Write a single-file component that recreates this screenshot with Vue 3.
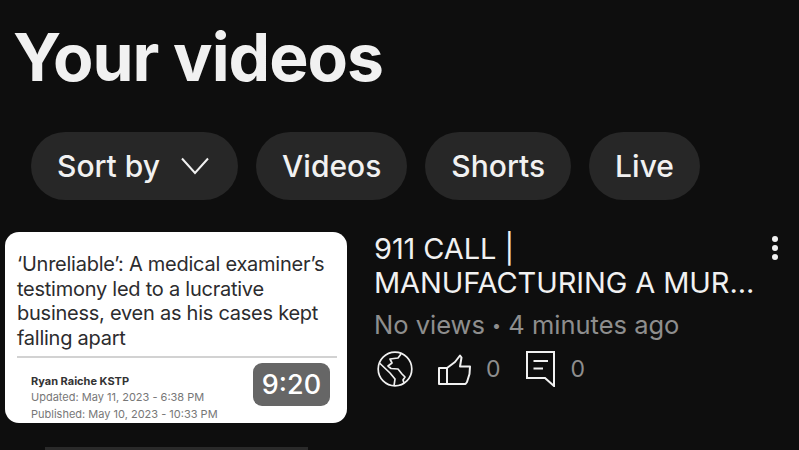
<script setup>
const filters = ['Videos', 'Shorts', 'Live']
</script>

<template>
  <main class="page">
    <h1 class="title">Your videos</h1>

    <div class="chips">
      <button class="chip chip-sort">
        Sort by
        <svg class="chevron" width="28" height="18" viewBox="0 0 28 18" fill="none" stroke="#f1f1f1" stroke-width="2">
          <path d="M1 1.5 14 16 27 1.5" />
        </svg>
      </button>
      <button v-for="f in filters" :key="f" class="chip">{{ f }}</button>
    </div>

    <section class="video">
      <div class="thumb">
        <p class="headline">‘Unreliable’: A medical examiner’s testimony led to a lucrative business, even as his cases kept falling apart</p>
        <div class="rule"></div>
        <div class="byline">
          <strong>Ryan Raiche KSTP</strong>
          <span>Updated: May 11, 2023 - 6:38 PM</span>
          <span>Published: May 10, 2023 - 10:33 PM</span>
        </div>
        <span class="duration">9:20</span>
      </div>

      <div class="info">
        <div class="info-top">
          <h2 class="video-title">911 CALL |<br />MANUFACTURING A MUR...</h2>
          <div class="kebab"><i></i><i></i><i></i></div>
        </div>
        <p class="meta">No views <span class="dot">•</span> 4 minutes ago</p>
        <div class="stats">
          <svg class="globe" width="36" height="36" viewBox="0 0 36 36" fill="none" stroke="#f1f1f1" stroke-width="1.7" stroke-linejoin="round">
            <circle cx="18" cy="18" r="16.8" />
            <path d="M24 3 21 7 13 8 15 12 11 15 14 17.5 21 18 25 23 28 26 26 29 27 32" />
            <path d="M2.5 12 13 22 18 28 17 34.8" />
          </svg>
          <svg class="thumb-up" width="33" height="31" viewBox="0 0 33 31" fill="none" stroke="#f1f1f1" stroke-width="2" stroke-linejoin="round">
            <path d="M1 14h8V30H1z" />
            <path d="M9 14 17 8 22 1.5 23.5 3.5 22 12.5H32L31.5 20 29 28 27.5 30H9" />
          </svg>
          <span class="count">0</span>
          <svg class="comment" width="29" height="36" viewBox="0 0 29 36" fill="none" stroke="#f1f1f1" stroke-width="2">
            <path d="M1 1H28V35L19 27H1z" />
            <path d="M7.5 10H22M7.5 17.5H17" />
          </svg>
          <span class="count">0</span>
        </div>
      </div>
    </section>

    <div class="next-thumb"></div>
  </main>
</template>

<style>
html,
body {
  margin: 0;
  background: #0e0e0e;
}
</style>

<style scoped>
.page {
  width: 799px;
  height: 450px;
  overflow: hidden;
  background: #0e0e0e;
  font-family: Inter, "Liberation Sans", sans-serif;
  color: #f1f1f1;
}

.title {
  margin: 0;
  padding: 17px 0 0 13px;
  height: 132px;
  box-sizing: border-box;
  font-size: 66px;
  line-height: 80px;
  font-weight: 700;
  letter-spacing: -1px;
}

.chips {
  display: flex;
  gap: 18px;
  padding-left: 31px;
}

.chip {
  height: 68px;
  padding: 0 26px;
  border: 0;
  border-radius: 34px;
  background: #272727;
  color: #f1f1f1;
  font: 500 30px Inter, "Liberation Sans", sans-serif;
  display: flex;
  align-items: center;
}

.chip-sort {
  gap: 21px;
  padding-right: 29px;
}

.video {
  display: flex;
  padding: 32px 0 0 5px;
}

.thumb {
  position: relative;
  width: 342px;
  height: 191px;
  flex: none;
  box-sizing: border-box;
  padding: 20px 10px 0 12px;
  border-radius: 14px;
  background: #fff;
  color: #2c2c2e;
  overflow: hidden;
}

.headline {
  margin: 0;
  font-size: 20px;
  line-height: 24.7px;
  letter-spacing: -0.25px;
}

.rule {
  height: 2px;
  margin-top: 5px;
  background: #d2d2d2;
}

.byline {
  display: flex;
  flex-direction: column;
  padding: 15px 0 0 14px;
  font-size: 11px;
  line-height: 16.5px;
  color: #777;
}

.byline strong {
  color: #333;
  font-weight: 700;
}

.duration {
  position: absolute;
  left: 248px;
  top: 131px;
  width: 77px;
  height: 43px;
  border-radius: 9px;
  background: #666;
  color: #fff;
  font-size: 27px;
  font-weight: 500;
  line-height: 43px;
  text-align: center;
}

.info {
  flex: 1;
  padding: 0 18px 0 27px;
}

.info-top {
  display: flex;
  justify-content: space-between;
}

.video-title {
  margin: 0;
  font-size: 29px;
  line-height: 34px;
  font-weight: 400;
  letter-spacing: -0.1px;
  white-space: nowrap;
}

.kebab {
  display: flex;
  flex-direction: column;
  gap: 3px;
  padding: 4px 3px 0 0;
}

.kebab i {
  width: 6px;
  height: 6px;
  border-radius: 50%;
  background: #f1f1f1;
}

.meta {
  margin: 8px 0 0;
  font-size: 25.5px;
  line-height: 34px;
  color: #8e8e8e;
}

.dot {
  font-size: 16px;
  vertical-align: 3px;
}

.stats {
  display: flex;
  align-items: center;
  padding: 9px 0 0 3px;
}

.thumb-up {
  margin-left: 25px;
}

.count {
  font-size: 23px;
  line-height: 36px;
  color: #8e8e8e;
}

.thumb-up + .count {
  margin-left: 15px;
}

.comment {
  margin-left: 25px;
}

.comment + .count {
  margin-left: 16px;
}

.next-thumb {
  height: 3px;
  margin: 24px 491px 0 45px;
  background: #2a2a2a;
}
</style>
